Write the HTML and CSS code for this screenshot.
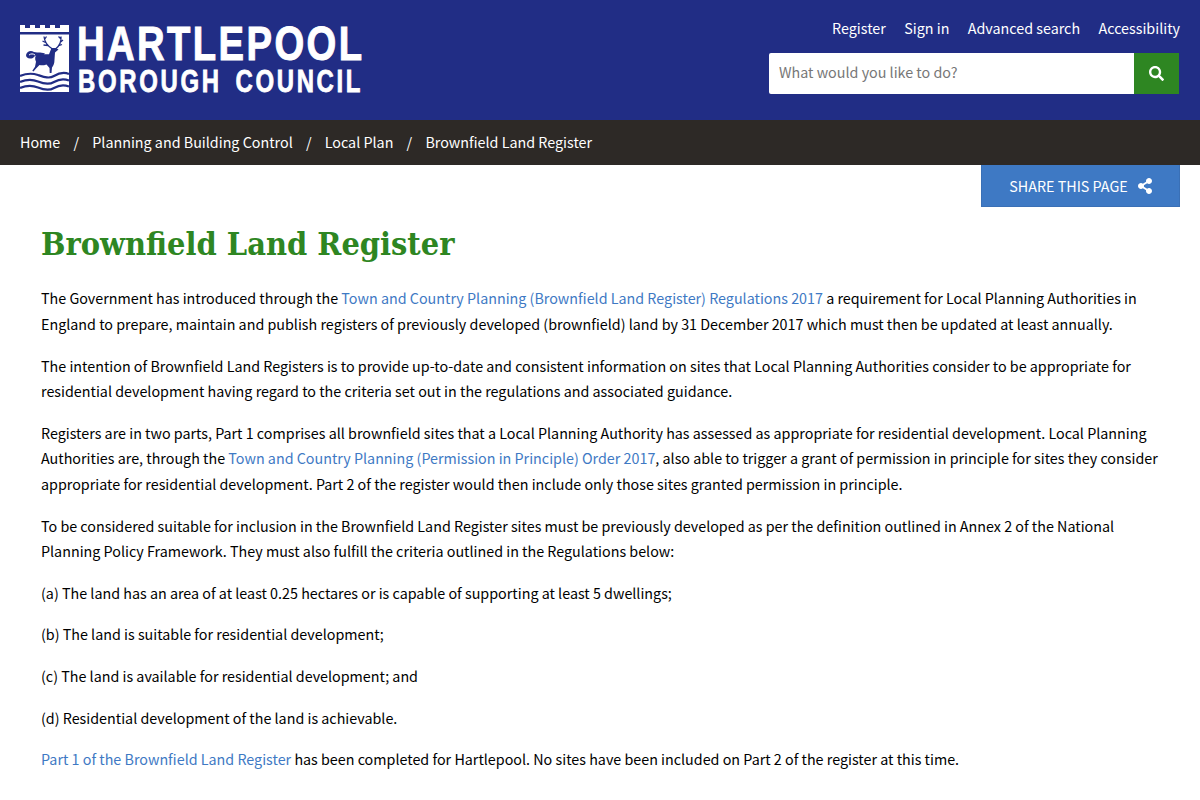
FILE: index.html
```html
<!DOCTYPE html>
<html lang="en">
<head>
<meta charset="utf-8">
<title>Brownfield Land Register</title>
<link rel="stylesheet" href="styles.css">
</head>
<body>
<header class="masthead">
  <a class="logo" href="#" aria-label="Hartlepool Borough Council">
    <svg class="logo-svg" width="342" height="70" viewBox="0 0 342 70">
      <g transform="translate(0,1)">
        <path fill="#fff" d="M0 0h5v3h5V0h5v3h5V0h5v3h5V0h5v3h5V0h9v7H0z"/>
        <path fill="#fff" d="M0 9.500h49V67H0z"/>
        <path fill="#212d85" d="M31 23h5l2.500 1.500-3.500 3-.5 7c0 4-1 6-2.500 8l-.5 5.500h-1.800l-.2-5-3-3.500c-3 1-5 1-7 .5l-3.500 3.500-2.500 3-1.200-.8 2.700-4 1-5c-1.500-3-1-6 1-7.500 4-.5 8 .5 12 0l2-5z"/>
        <path fill="none" stroke="#212d85" stroke-width="1.300" d="M32.500 24C27.500 21 24.500 17 24 11.500M28 20.500l-4.500-.5M25.500 17.500l-3-1.500M24.500 14.500l2-3M35.500 24c4-3 6-7 5.500-12.500M38 21l4-1.500M40 17.500l3-2.500M41 14l-2.500-2.500"/>
        <path fill="#212d85" d="M6 30c1-4 5-5 8-3 3 1 6-.5 11 1.500l-2 2c-4-.5-8-1-10 2.500-4 1.500-7 0-7-3z"/>
        <path fill="none" stroke="#fff" stroke-width="1" d="M9 30c2-1.500 4-1.500 6 0"/>
        <path fill="none" stroke="#212d85" stroke-width="2.200" d="M0 51c7-3 12-3 18-1s11 4 16 1 10-4 15-2M0 57c7-3 12-3 18-.5s11 3.500 16 .5 10-3.500 15-1.500M0 63c7-3 12-3 18-.5s11 3.500 16 .5 10-3.500 15-1.500"/>
      </g>
      <text class="logo-big" transform="translate(57,35.500) scale(.78,1)">HARTLEPOOL</text>
      <text class="logo-small" transform="translate(58,68) scale(.76,1)">BOROUGH COUNCIL</text>
    </svg>
  </a>
  <div class="tools">
    <nav class="toplinks">
      <a href="#">Register</a>
      <a href="#">Sign in</a>
      <a href="#">Advanced search</a>
      <a href="#">Accessibility</a>
    </nav>
    <form class="search">
      <input class="search-input" type="text" placeholder="What would you like to do?">
      <button class="search-btn" type="button" aria-label="Search">
        <svg width="15" height="15" viewBox="0 0 512 512"><path fill="#fff" d="M505 442.700 405.300 343c-4.500-4.500-10.600-7-17-7H372c27.600-35.300 44-79.700 44-128C416 93.100 322.900 0 208 0S0 93.100 0 208s93.100 208 208 208c48.300 0 92.700-16.400 128-44v16.300c0 6.400 2.500 12.500 7 17l99.700 99.700c9.400 9.400 24.600 9.400 33.900 0l28.300-28.300c9.400-9.400 9.400-24.600.1-34zM208 336c-70.700 0-128-57.200-128-128 0-70.700 57.200-128 128-128 70.700 0 128 57.200 128 128 0 70.700-57.200 128-128 128z"/></svg>
      </button>
    </form>
  </div>
</header>
<nav class="crumbs">
  <a href="#">Home</a><span class="sep">/</span>
  <a href="#">Planning and Building Control</a><span class="sep">/</span>
  <a href="#">Local Plan</a><span class="sep">/</span>
  <a href="#">Brownfield Land Register</a>
</nav>
<div class="share-row">
  <a class="share" href="#">SHARE THIS PAGE
    <svg width="14" height="16" viewBox="0 0 448 512"><path fill="#fff" d="M352 320c-22.600 0-43.400 7.800-59.800 20.900l-102.500-64.100a96.600 96.600 0 0 0 0-41.700l102.500-64.100C308.600 184.200 329.400 192 352 192c53 0 96-43 96-96S405 0 352 0s-96 43-96 96c0 7.200.8 14.200 2.300 20.900l-102.500 64.100C139.400 167.800 118.600 160 96 160c-53 0-96 43-96 96s43 96 96 96c22.600 0 43.400-7.800 59.800-20.900l102.500 64.100A96.300 96.300 0 0 0 256 416c0 53 43 96 96 96s96-43 96-96-43-96-96-96z"/></svg>
  </a>
</div>
<main class="content">
  <h1 class="title">Brownfield Land Register</h1>
  <p>The Government has introduced through the <a href="#">Town and Country Planning (Brownfield Land Register) Regulations 2017</a> a requirement for Local Planning Authorities in England to prepare, maintain and publish registers of previously developed (brownfield) land by 31 December 2017 which must then be updated at least annually.</p>
  <p>The intention of Brownfield Land Registers is to provide up-to-date and consistent information on sites that Local Planning Authorities consider to be appropriate for residential development having regard to the criteria set out in the regulations and associated guidance.</p>
  <p>Registers are in two parts, Part 1 comprises all brownfield sites that a Local Planning Authority has assessed as appropriate for residential development. Local Planning Authorities are, through the <a href="#">Town and Country Planning (Permission in Principle) Order 2017</a>, also able to trigger a grant of permission in principle for sites they consider appropriate for residential development. Part 2 of the register would then include only those sites granted permission in principle.</p>
  <p>To be considered suitable for inclusion in the Brownfield Land Register sites must be previously developed as per the definition outlined in Annex 2 of the National Planning Policy Framework. They must also fulfill the criteria outlined in the Regulations below:</p>
  <p>(a) The land has an area of at least 0.25 hectares or is capable of supporting at least 5 dwellings;</p>
  <p>(b) The land is suitable for residential development;</p>
  <p>(c) The land is available for residential development; and</p>
  <p>(d) Residential development of the land is achievable.</p>
  <p><a href="#">Part 1 of the Brownfield Land Register</a> has been completed for Hartlepool. No sites have been included on Part 2 of the register at this time.</p>
</main>
</body>
</html>
```
FILE: styles.css
```css
* { box-sizing: border-box; }
html, body { margin: 0; padding: 0; height: 800px; overflow: hidden; }
body { font-family: "Noto Sans CJK SC", "Noto Sans", sans-serif; font-size: 14.32px; line-height: 25.6px; color: #000; background: #fff; }
a { text-decoration: none; }

.masthead { height: 120px; background: #212d85; display: flex; justify-content: space-between; padding: 0 20px; }
.logo { display: block; margin-top: 24px; height: 70px; }
.logo-svg { display: block; }
.logo-big { font-family: "Liberation Sans", sans-serif; font-weight: 700; font-size: 49px; letter-spacing: 3.1px; font-kerning: none; fill: #fff; stroke: #fff; stroke-width: 1px; }
.logo-small { font-family: "Liberation Sans", sans-serif; font-weight: 700; font-size: 31.5px; letter-spacing: 3.5px; word-spacing: 6px; font-kerning: none; fill: #fff; stroke: #fff; stroke-width: 0.8px; }

.tools { width: 411px; display: flex; flex-direction: column; align-items: flex-end; padding-top: 15px; }
.toplinks { display: flex; gap: 18.4px; height: 25.6px; }
.toplinks a { color: #fff; }
.search { display: flex; width: 410px; height: 41px; margin-top: 12.4px; margin-right: 1px; }
.search-input { flex: 1; min-width: 0; height: 41px; border: 0; padding: 0 10px 3px; border-radius: 2px 0 0 2px; font: inherit; color: #111; background: #fff; outline: 0; }
.search-input::placeholder { color: #777; opacity: 1; }
.search-btn { width: 45px; height: 41px; border: 0; padding: 0; background: #2e8622; display: flex; align-items: center; justify-content: center; }

.crumbs { height: 45px; background: #2d2926; display: flex; align-items: center; padding: 0 20px 1px; }
.crumbs a { color: #fff; }
.sep { color: #fff; width: 32px; text-align: center; }

.share-row { display: flex; justify-content: flex-end; padding-right: 20px; }
.share { width: 199px; height: 42px; background: #3e79c4; border: 1px solid #3a70b6; border-top: 0; color: #fff; display: flex; align-items: center; justify-content: center; gap: 10px; }

.content { padding: 0 38px 0 41px; }
.title { margin: 17px 0 21.4px; font-family: "DejaVu Serif Condensed", "DejaVu Serif", serif; font-weight: 700; font-size: 32.2px; line-height: 40px; color: #2e8622; }
.content p { margin: 0 0 16px; }
.content p a { color: #3e79c4; }
```
